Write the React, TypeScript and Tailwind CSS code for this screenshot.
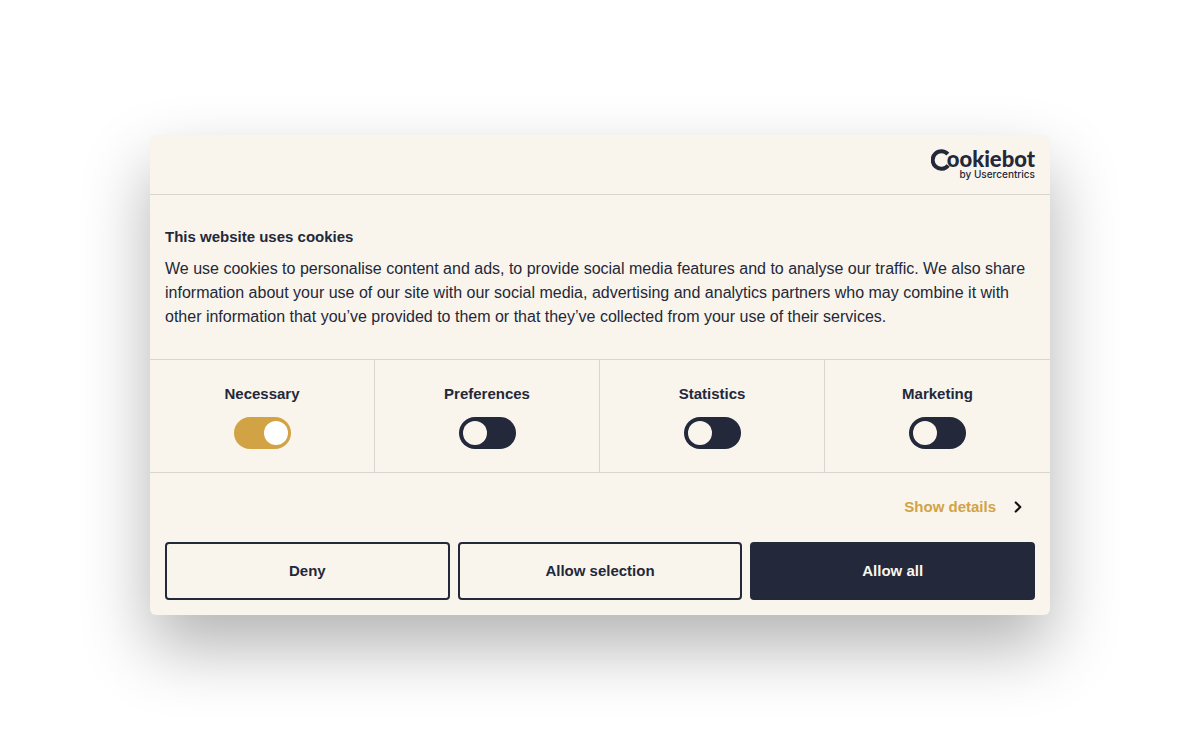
import { ChevronRight } from "lucide-react";

type CookieCategory = {
  id: string;
  label: string;
  checked: boolean;
  locked?: boolean;
};

const categories: CookieCategory[] = [
  { id: "necessary", label: "Necessary", checked: true, locked: true },
  { id: "preferences", label: "Preferences", checked: false },
  { id: "statistics", label: "Statistics", checked: false },
  { id: "marketing", label: "Marketing", checked: false },
];

const Logo = () => (
  <div className="flex flex-col items-end" role="img" aria-label="Cookiebot by Usercentrics">
    <div className="flex h-[19px] items-start">
      <svg viewBox="0 0 20 22" className="-mr-1 h-[22px] w-5 shrink-0" fill="none" stroke="#23283a" strokeWidth="4">
        <path d="M16.8 5.2A8.7 8.7 0 1 0 17.2 16.4" />
      </svg>
      <span className="font-[Lato] text-[22px] leading-[19px] font-black">ookiebot</span>
    </div>
    <span className="font-[Inter] text-[10px] leading-3 font-medium">by Usercentrics</span>
  </div>
);

const CategoryToggle = ({ id, label, checked, locked }: CookieCategory) => (
  <div className="flex flex-col items-center border-r border-[#d9d6d2] pt-[22px] pb-[23px] last:border-r-0">
    <label htmlFor={id} className="text-[15px] leading-6 font-bold">
      {label}
    </label>
    <input
      id={id}
      type="checkbox"
      role="switch"
      defaultChecked={checked}
      disabled={locked}
      className="mt-[11px] flex h-8 w-[57px] cursor-pointer appearance-none items-center rounded-full bg-[#23283a] px-1 before:size-6 before:rounded-full before:bg-[#faf5ec] checked:justify-end checked:px-[3px] checked:before:bg-white disabled:cursor-default disabled:bg-[#d1a344]"
    />
  </div>
);

const App = () => {
  return (
    <main className="flex min-h-screen items-center justify-center bg-white font-['Liberation_Sans',Arial,sans-serif] text-[#23283a]">
      <div
        role="dialog"
        aria-labelledby="cookie-title"
        className="w-3/4 max-w-[900px] rounded-md bg-[#faf5ec] shadow-[0_32px_68px_rgba(0,0,0,0.3)]"
      >
        <header className="flex justify-end border-b border-[#d9d6d2] px-[15px] py-3.5">
          <Logo />
        </header>

        <section className="px-[15px] pt-[30px] pb-[30px]">
          <h2 id="cookie-title" className="text-[15px] leading-6 font-bold">
            This website uses cookies
          </h2>
          <p className="mt-2 text-base leading-6">
            We use cookies to personalise content and ads, to provide social media features and to analyse our traffic. We also share
            <br />
            information about your use of our site with our social media, advertising and analytics partners who may combine it with
            <br />
            other information that you’ve provided to them or that they’ve collected from your use of their services.
          </p>
        </section>

        <div className="grid grid-cols-4 border-y border-[#d9d6d2]">
          {categories.map((category) => (
            <CategoryToggle key={category.id} {...category} />
          ))}
        </div>

        <footer className="px-[15px] pt-[22px] pb-[15px]">
          <div className="flex justify-end pr-2">
            <a href="#details" className="flex items-center gap-[13px] text-[15px] leading-6 font-bold text-[#d1a344]">
              Show details
              <ChevronRight size={18} strokeWidth={3} className="text-[#141414]" />
            </a>
          </div>
          <div className="mt-[23px] grid grid-cols-3 gap-2 text-[15px] font-bold">
            <button type="button" className="h-[58px] rounded-sm border-2 border-[#23283a]">
              Deny
            </button>
            <button type="button" className="h-[58px] rounded-sm border-2 border-[#23283a]">
              Allow selection
            </button>
            <button type="button" className="h-[58px] rounded-sm border-2 border-[#23283a] bg-[#23283a] text-[#faf5ec]">
              Allow all
            </button>
          </div>
        </footer>
      </div>
    </main>
  );
};

export default App;
